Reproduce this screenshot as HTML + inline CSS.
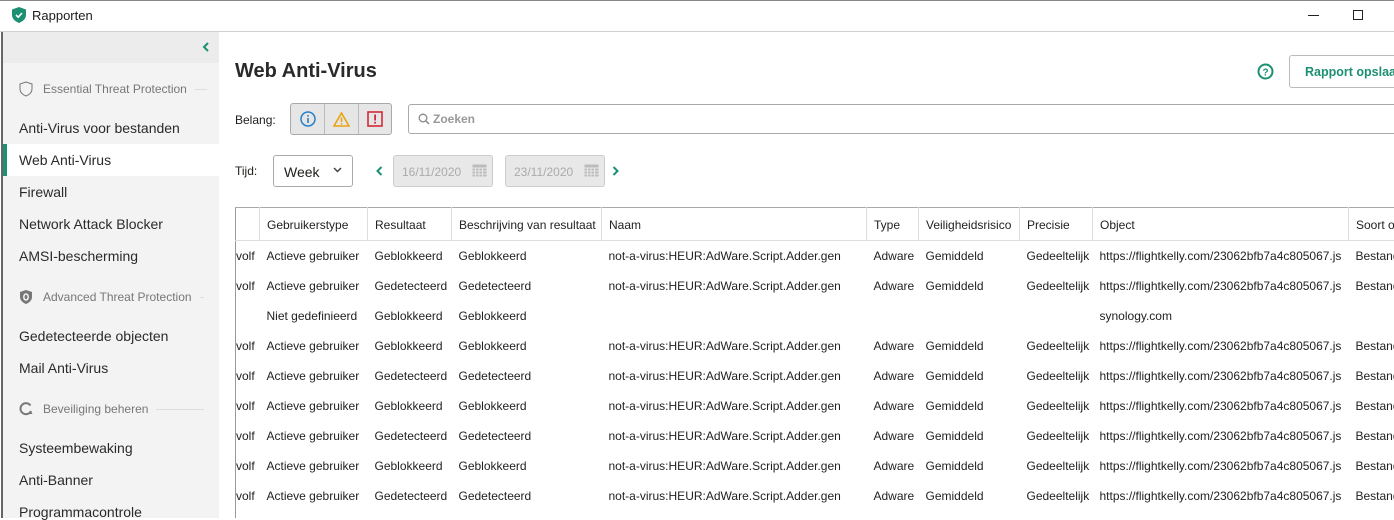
<!DOCTYPE html>
<html><head><meta charset="utf-8"><style>
*{margin:0;padding:0;box-sizing:border-box}
body{width:1394px;height:518px;overflow:hidden;background:#fff;font-family:"Liberation Sans",sans-serif;color:#1d1d1b;position:relative}
.a{position:absolute;white-space:nowrap}
.side{position:absolute;left:3px;top:32px;width:216px;height:486px;background:#f3f3f3}
.nav{position:absolute;left:19px;font-size:14px;color:#2a2a2a}
.grp{position:absolute;left:19px;font-size:12px;color:#777;display:flex;align-items:center}
.grp span.l{display:inline-block;height:1px;background:#ddd;margin-left:8px}
table{position:absolute;left:235px;top:207px;border-collapse:collapse;font-size:12px;table-layout:fixed;width:1170px;border-top:1px solid #aaa;border-left:1px solid #999}
td,th{white-space:nowrap;overflow:hidden;padding-left:7px;text-align:left;font-weight:normal;height:30px;color:#222}
th{height:33px;border-right:1px solid #ddd;border-bottom:1px solid #ddd;padding-top:2px}
</style></head><body>
<div class="a" style="left:0;top:0;width:1394px;height:1px;background:#888"></div>
<div class="a" style="left:0;top:31px;width:1394px;height:1px;background:#d0d0d0"></div>
<svg class="a" style="left:12px;top:7px" width="14" height="16" viewBox="0 0 14 16"><path d="M7 0L14 2.5V8C14 12 10.5 14.5 7 16C3.5 14.5 0 12 0 8V2.5Z" fill="#1d8f72"/><path d="M4 8L6.2 10.2L10 6" stroke="#fff" stroke-width="1.6" fill="none"/></svg>
<div class="a" style="left:32px;top:8px;font-size:13px">Rapporten</div>
<div class="a" style="left:1308px;top:15px;width:11px;height:1px;background:#222"></div>
<div class="a" style="left:1353px;top:10px;width:10px;height:10px;border:1px solid #222"></div>
<div class="a" style="left:1px;top:32px;width:2px;height:486px;background:#666"></div>
<div class="side"></div>
<div class="a" style="left:3px;top:32px;width:216px;height:31px;background:#ececec"></div>
<svg class="a" style="left:202px;top:42px" width="8" height="10"><path d="M6 1L2 5L6 9" stroke="#1d8f72" stroke-width="2" fill="none"/></svg>
<div class="grp" style="top:81px"><svg width="14" height="16" viewBox="0 0 14 16" style="margin-right:10px"><path d="M7 1L13 3V8C13 11.5 10 13.8 7 15C4 13.8 1 11.5 1 8V3Z" stroke="#777" fill="none"/></svg>Essential Threat Protection<span class="l" style="width:12px"></span></div>
<div class="nav" style="top:120px">Anti-Virus voor bestanden</div>
<div class="a" style="left:3px;top:144px;width:216px;height:32px;background:#fff"></div>
<div class="a" style="left:3px;top:144px;width:4px;height:32px;background:#1d8f72"></div>
<div class="nav" style="top:152px">Web Anti-Virus</div>
<div class="nav" style="top:184px">Firewall</div>
<div class="nav" style="top:216px">Network Attack Blocker</div>
<div class="nav" style="top:248px">AMSI-bescherming</div>
<div class="grp" style="top:289px"><svg width="14" height="16" viewBox="0 0 14 16" style="margin-right:10px"><path d="M7 1L13 3V8C13 11.5 10 13.8 7 15C4 13.8 1 11.5 1 8V3Z" fill="#777"/><ellipse cx="7" cy="8" rx="2.2" ry="3" stroke="#f3f3f3" stroke-width="1.5" fill="none"/></svg>Advanced Threat Protection<span class="l" style="width:4px"></span></div>
<div class="nav" style="top:328px">Gedetecteerde objecten</div>
<div class="nav" style="top:360px">Mail Anti-Virus</div>
<div class="grp" style="top:401px"><svg width="14" height="16" viewBox="0 0 14 16" style="margin-right:10px"><path d="M11.5 4.5A5.5 5.5 0 1 0 12 10" stroke="#777" stroke-width="2" fill="none"/><path d="M9 13L12 10L13.5 13Z" fill="#777"/></svg>Beveiliging beheren<span class="l" style="width:48px"></span></div>
<div class="nav" style="top:440px">Systeembewaking</div>
<div class="nav" style="top:472px">Anti-Banner</div>
<div class="nav" style="top:504px">Programmacontrole</div>

<div class="a" style="left:235px;top:60px;font-size:20px;font-weight:bold;color:#2a2a2a">Web Anti-Virus</div>
<svg class="a" style="left:1257px;top:63px" width="17" height="17"><circle cx="8.5" cy="8.5" r="7" stroke="#1d8f72" stroke-width="2" fill="none"/><text x="8.5" y="12.5" font-size="10" font-weight="bold" text-anchor="middle" fill="#1d8f72" font-family="Liberation Sans">?</text></svg>
<div class="a" style="left:1289px;top:55px;width:120px;height:33px;border:1px solid #bbb;border-radius:3px;font-size:12.5px;font-weight:bold;color:#1d8f72;padding:9px 0 0 15px">Rapport opslaan</div>
<div class="a" style="left:235px;top:113px;font-size:12px">Belang:</div>
<div class="a" style="left:290px;top:103px;width:102px;height:32px;border:1px solid #aaa;border-radius:3px;background:#e6e6e6;display:flex">
<div style="width:34px;border-right:1px solid #bbb;display:flex;align-items:center;justify-content:center"><svg width="16" height="16"><circle cx="8" cy="8" r="7" stroke="#2a7fc9" stroke-width="1.5" fill="none"/><rect x="7.2" y="7" width="1.6" height="5" fill="#2a7fc9"/><rect x="7.2" y="4" width="1.6" height="1.6" fill="#2a7fc9"/></svg></div>
<div style="width:34px;border-right:1px solid #bbb;display:flex;align-items:center;justify-content:center"><svg width="17" height="15"><path d="M8.5 1L16 14H1Z" stroke="#e8a30f" stroke-width="1.6" fill="none"/><rect x="7.7" y="5.5" width="1.6" height="4.5" fill="#e8a30f"/><rect x="7.7" y="11" width="1.6" height="1.5" fill="#e8a30f"/></svg></div>
<div style="width:32px;display:flex;align-items:center;justify-content:center"><svg width="16" height="16"><rect x="1" y="1" width="14" height="14" stroke="#d22b3a" stroke-width="1.6" fill="none"/><rect x="7.2" y="3.5" width="1.8" height="6" fill="#d22b3a"/><rect x="7.2" y="10.8" width="1.8" height="1.8" fill="#d22b3a"/></svg></div></div>
<div class="a" style="left:408px;top:104px;width:990px;height:30px;border:1px solid #aaa;border-radius:3px"></div>
<svg class="a" style="left:418px;top:113px" width="12" height="12"><circle cx="5" cy="5" r="3.8" stroke="#888" stroke-width="1.3" fill="none"/><path d="M8 8L11 11" stroke="#888" stroke-width="1.5"/></svg>
<div class="a" style="left:433px;top:112px;font-size:12px;font-weight:bold;color:#999">Zoeken</div>
<div class="a" style="left:235px;top:164px;font-size:12px">Tijd:</div>
<div class="a" style="left:273px;top:155px;width:80px;height:32px;border:1px solid #aaa;border-radius:3px;font-size:14px;padding:8px 0 0 10px">Week</div>
<svg class="a" style="left:333px;top:167px" width="9" height="6"><path d="M1 1L4.5 4.5L8 1" stroke="#444" stroke-width="1.5" fill="none"/></svg>
<svg class="a" style="left:376px;top:166px" width="7" height="10"><path d="M5.5 1L1.5 5L5.5 9" stroke="#1d8f72" stroke-width="2" fill="none"/></svg>
<div class="a" style="left:393px;top:155px;width:100px;height:32px;border:1px solid #ccc;border-radius:3px;background:#e8e8e8;font-size:12px;color:#aaa;padding:9px 0 0 8px">16/11/2020</div>
<div class="a" style="left:505px;top:155px;width:100px;height:32px;border:1px solid #ccc;border-radius:3px;background:#e8e8e8;font-size:12px;color:#aaa;padding:9px 0 0 8px">23/11/2020</div>
<svg class="a" style="left:472px;top:163px" width="15" height="14"><rect x="0.5" y="1.5" width="14" height="12" fill="#bbb"/><path d="M0 5H15M3.5 5V14M7 5V14M10.5 5V14M0 8H15M0 11H15" stroke="#e8e8e8"/></svg>
<svg class="a" style="left:584px;top:163px" width="15" height="14"><rect x="0.5" y="1.5" width="14" height="12" fill="#bbb"/><path d="M0 5H15M3.5 5V14M7 5V14M10.5 5V14M0 8H15M0 11H15" stroke="#e8e8e8"/></svg>
<svg class="a" style="left:612px;top:166px" width="7" height="10"><path d="M1.5 1L5.5 5L1.5 9" stroke="#1d8f72" stroke-width="2" fill="none"/></svg>
<div class="a" style="left:235px;top:207px;width:1px;height:311px;background:#999"></div>

<table>
<colgroup><col style="width:24px"><col style="width:108px"><col style="width:84px"><col style="width:150px"><col style="width:265px"><col style="width:52px"><col style="width:101px"><col style="width:73px"><col style="width:256px"><col style="width:57px"></colgroup>
<tr><th></th><th>Gebruikerstype</th><th>Resultaat</th><th>Beschrijving van resultaat</th><th>Naam</th><th>Type</th><th>Veiligheidsrisico</th><th>Precisie</th><th>Object</th><th>Soort o</th></tr>
<tr><td style="padding-left:0">volf</td><td>Actieve gebruiker</td><td>Geblokkeerd</td><td>Geblokkeerd</td><td>not-a-virus:HEUR:AdWare.Script.Adder.gen</td><td>Adware</td><td>Gemiddeld</td><td>Gedeeltelijk</td><td>https://flightkelly.com/23062bfb7a4c805067.js</td><td>Bestand</td></tr>
<tr><td style="padding-left:0">volf</td><td>Actieve gebruiker</td><td>Gedetecteerd</td><td>Gedetecteerd</td><td>not-a-virus:HEUR:AdWare.Script.Adder.gen</td><td>Adware</td><td>Gemiddeld</td><td>Gedeeltelijk</td><td>https://flightkelly.com/23062bfb7a4c805067.js</td><td>Bestand</td></tr>
<tr><td></td><td>Niet gedefinieerd</td><td>Geblokkeerd</td><td>Geblokkeerd</td><td></td><td></td><td></td><td></td><td>synology.com</td><td></td></tr>
<tr><td style="padding-left:0">volf</td><td>Actieve gebruiker</td><td>Geblokkeerd</td><td>Geblokkeerd</td><td>not-a-virus:HEUR:AdWare.Script.Adder.gen</td><td>Adware</td><td>Gemiddeld</td><td>Gedeeltelijk</td><td>https://flightkelly.com/23062bfb7a4c805067.js</td><td>Bestand</td></tr>
<tr><td style="padding-left:0">volf</td><td>Actieve gebruiker</td><td>Gedetecteerd</td><td>Gedetecteerd</td><td>not-a-virus:HEUR:AdWare.Script.Adder.gen</td><td>Adware</td><td>Gemiddeld</td><td>Gedeeltelijk</td><td>https://flightkelly.com/23062bfb7a4c805067.js</td><td>Bestand</td></tr>
<tr><td style="padding-left:0">volf</td><td>Actieve gebruiker</td><td>Geblokkeerd</td><td>Geblokkeerd</td><td>not-a-virus:HEUR:AdWare.Script.Adder.gen</td><td>Adware</td><td>Gemiddeld</td><td>Gedeeltelijk</td><td>https://flightkelly.com/23062bfb7a4c805067.js</td><td>Bestand</td></tr>
<tr><td style="padding-left:0">volf</td><td>Actieve gebruiker</td><td>Gedetecteerd</td><td>Gedetecteerd</td><td>not-a-virus:HEUR:AdWare.Script.Adder.gen</td><td>Adware</td><td>Gemiddeld</td><td>Gedeeltelijk</td><td>https://flightkelly.com/23062bfb7a4c805067.js</td><td>Bestand</td></tr>
<tr><td style="padding-left:0">volf</td><td>Actieve gebruiker</td><td>Geblokkeerd</td><td>Geblokkeerd</td><td>not-a-virus:HEUR:AdWare.Script.Adder.gen</td><td>Adware</td><td>Gemiddeld</td><td>Gedeeltelijk</td><td>https://flightkelly.com/23062bfb7a4c805067.js</td><td>Bestand</td></tr>
<tr><td style="padding-left:0">volf</td><td>Actieve gebruiker</td><td>Gedetecteerd</td><td>Gedetecteerd</td><td>not-a-virus:HEUR:AdWare.Script.Adder.gen</td><td>Adware</td><td>Gemiddeld</td><td>Gedeeltelijk</td><td>https://flightkelly.com/23062bfb7a4c805067.js</td><td>Bestand</td></tr>
</table>
</body></html>
